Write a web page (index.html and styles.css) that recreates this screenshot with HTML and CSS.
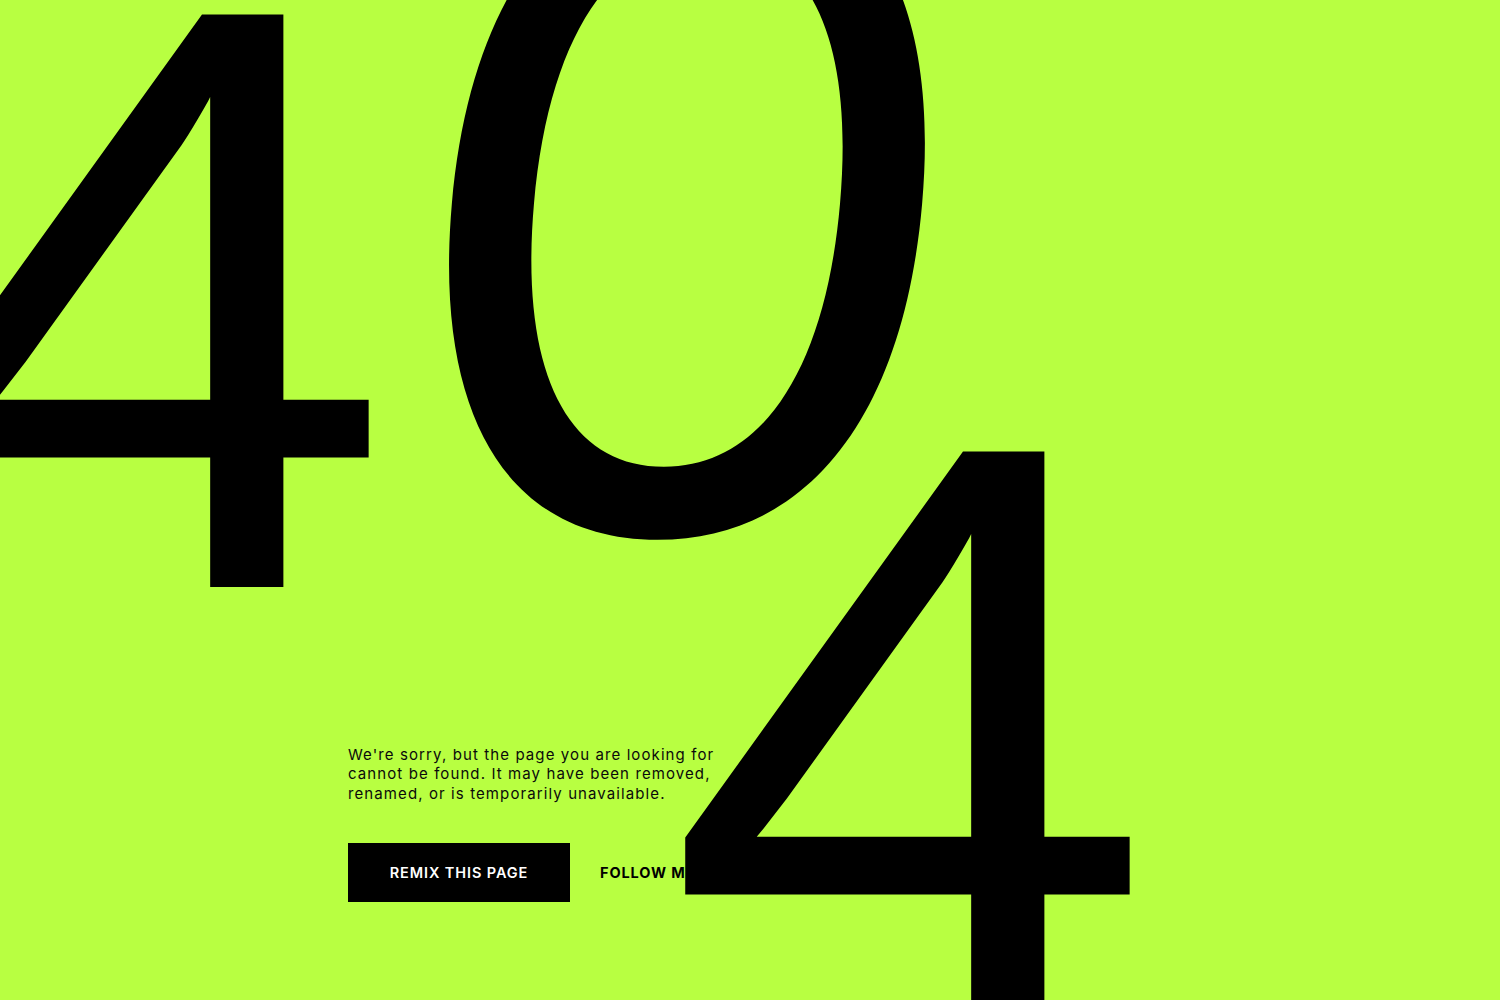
FILE: index.html
```html
<!DOCTYPE html>
<html lang="en">
<head>
<meta charset="utf-8">
<title>404 - Page not found</title>
<link rel="stylesheet" href="styles.css">
</head>
<body>
<main class="page">
  <section class="message">
    <p class="lead">We're sorry, but the page you are looking for<br>cannot be found. It may have been removed,<br>renamed, or is temporarily unavailable.</p>
    <div class="actions">
      <a class="btn" href="#">REMIX THIS PAGE</a>
      <a class="link" href="#">FOLLOW ME</a>
    </div>
  </section>
  <div class="digits" aria-hidden="true">
    <span class="digit four four-a">4</span>
    <span class="digit zero">0</span>
    <span class="digit four four-b">4</span>
  </div>
</main>
</body>
</html>
```
FILE: styles.css
```css
html, body {
  margin: 0;
  padding: 0;
}

body {
  background: #b8ff41;
  color: #000;
  font-family: Inter, "Liberation Sans", sans-serif;
  overflow: hidden;
}

.page {
  position: relative;
  height: 100vh;
  box-sizing: border-box;
  display: flex;
  flex-direction: column;
  justify-content: flex-end;
  padding: 0 0 98px 348px;
  overflow: hidden;
}

.message {
  display: flex;
  flex-direction: column;
  gap: 40px;
}

.lead {
  margin: 0;
  font-size: 15px;
  line-height: 19.5px;
  letter-spacing: 1.1px;
  color: #0a0a0a;
}

.actions {
  display: flex;
  align-items: center;
  gap: 30px;
}

.btn {
  display: flex;
  align-items: center;
  justify-content: center;
  width: 222px;
  height: 59px;
  background: #000;
  color: #fff;
  text-decoration: none;
  font-size: 14.5px;
  font-weight: 600;
  letter-spacing: 0.9px;
}

.link {
  color: #000;
  text-decoration: none;
  font-size: 14.5px;
  font-weight: 700;
  letter-spacing: 0.9px;
}

.digits {
  position: absolute;
  inset: 0;
  pointer-events: none;
  z-index: 1;
}

.digit {
  position: absolute;
  display: block;
  color: #000;
  font-weight: 400;
  line-height: 1;
}

.four {
  font-family: "Liberation Sans", Arial, sans-serif;
  font-size: 832px;
  transform: scaleX(1.06);
  transform-origin: 0 0;
}

.four-a {
  left: -96px;
  top: -117px;
}

.four-b {
  left: 665px;
  top: 320px;
}

.zero {
  font-family: Inter, sans-serif;
  font-size: 901px;
  width: 600px;
  height: 901px;
  text-align: center;
  left: 387px;
  top: -247px;
  transform: skewX(-5deg) scaleX(1.02);
}
```
